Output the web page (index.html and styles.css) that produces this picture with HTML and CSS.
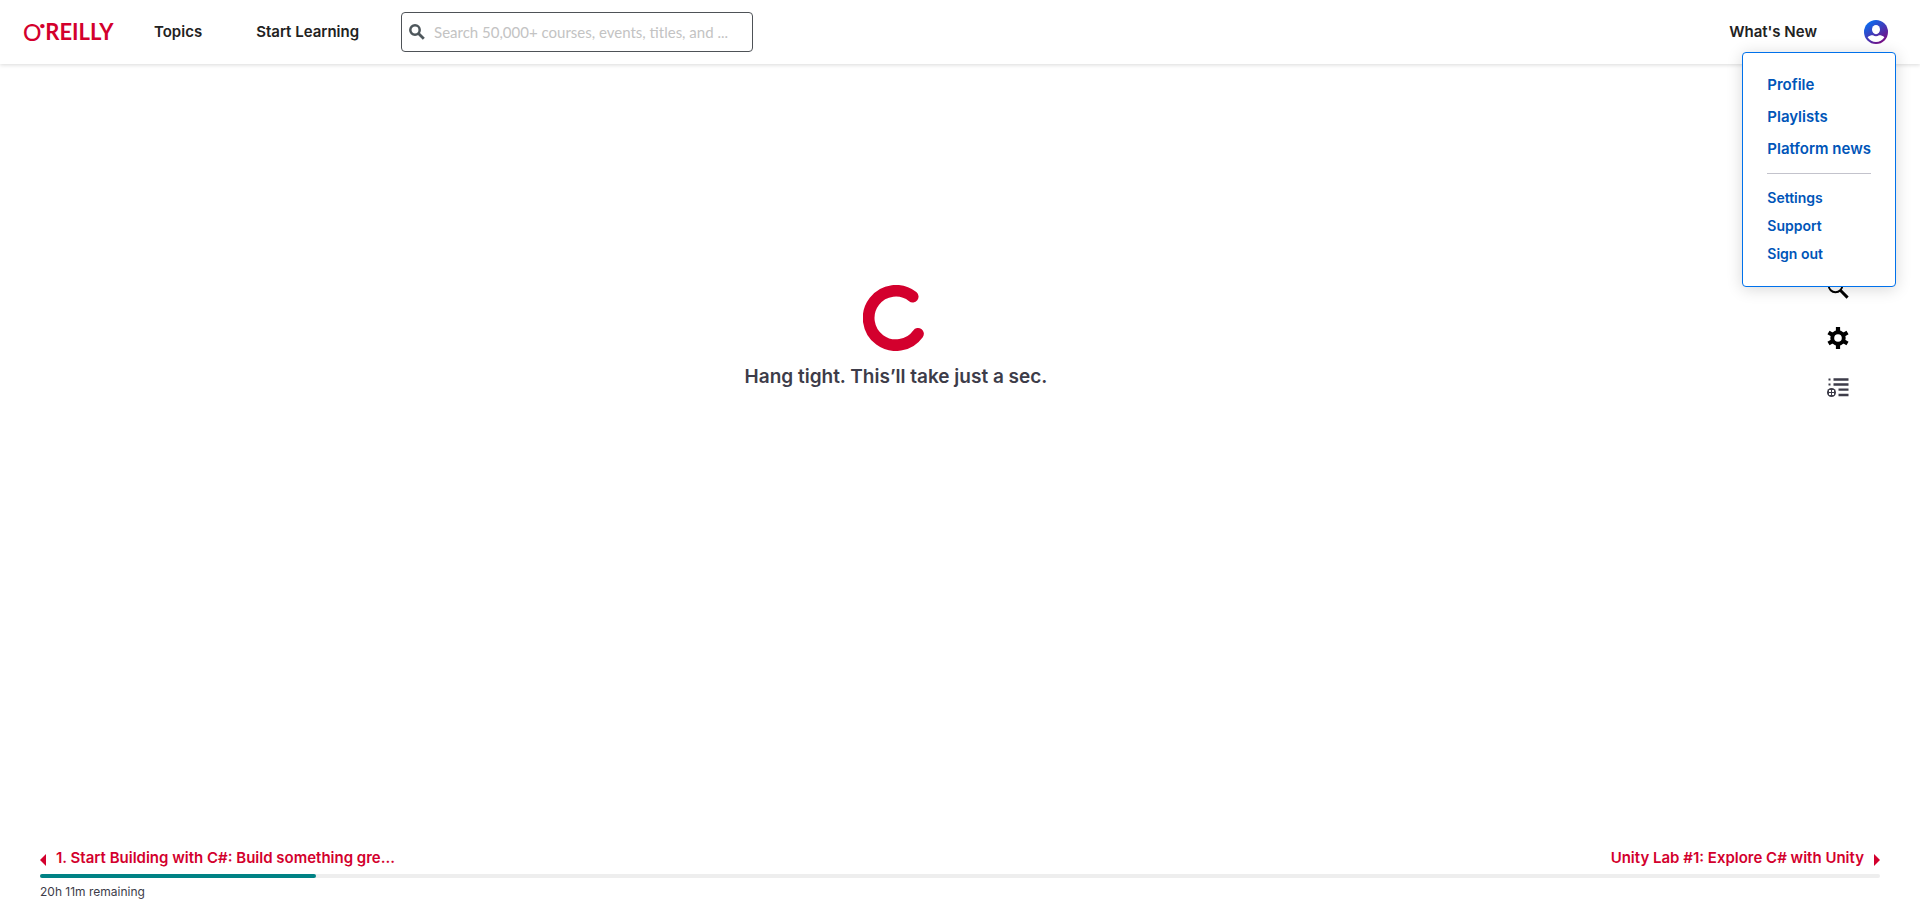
FILE: index.html
```html
<!DOCTYPE html>
<html lang="en">
<head>
<meta charset="utf-8">
<title>O'Reilly Learning</title>
<link rel="stylesheet" href="styles.css">
</head>
<body>
<header class="header">
  <a class="logo" href="#"><span class="logo-o">O</span><span class="logo-mark">•</span>REILLY</a>
  <nav class="nav">
    <a href="#">Topics</a>
    <a href="#">Start Learning</a>
  </nav>
  <form class="search" role="search">
    <svg class="search-icon" viewBox="0 0 16 16" aria-hidden="true"><circle cx="6" cy="6" r="4.7" fill="none" stroke="currentColor" stroke-width="2.5"/><path d="M9.5 9.5L14.8 14.8" stroke="currentColor" stroke-width="2.8"/></svg>
    <input class="search-input" type="search" aria-label="Search" placeholder="Search 50,000+ courses, events, titles, and ...">
  </form>
  <a class="whats-new" href="#">What's New</a>
  <div class="account">
    <button class="avatar" type="button" aria-label="Account menu" aria-expanded="true">
      <svg viewBox="0 0 24 24" aria-hidden="true">
        <defs><linearGradient id="avatar-fill" x1="0.15" y1="0.1" x2="0.8" y2="0.95"><stop offset="0" stop-color="#0a6cf0"/><stop offset="1" stop-color="#7a0a80"/></linearGradient></defs>
        <circle cx="12" cy="12" r="12" fill="url(#avatar-fill)"/>
        <ellipse cx="12" cy="9.6" rx="4" ry="4.6" fill="#fff"/>
        <path d="M3.6 17.2C5.5 15.4 7.5 15 9 15.2C10.8 16.5 13.2 16.5 15 15.2C16.5 15 18.5 15.4 20.4 17.2C18.5 20.2 15.4 21.9 12 21.9S5.5 20.2 3.6 17.2Z" fill="#fff"/>
      </svg>
    </button>
    <div class="menu">
      <ul class="menu-primary">
        <li><a href="#">Profile</a></li>
        <li><a href="#">Playlists</a></li>
        <li><a href="#">Platform news</a></li>
      </ul>
      <ul class="menu-secondary">
        <li><a href="#">Settings</a></li>
        <li><a href="#">Support</a></li>
        <li><a href="#">Sign out</a></li>
      </ul>
    </div>
  </div>
</header>
<div class="content">
  <main class="loading" role="status">
    <svg class="spinner" viewBox="0 0 66 66" aria-hidden="true"><path d="M49.7 11.6A27.2 27.2 0 1 0 55 48.8" fill="none" stroke="currentColor" stroke-width="11.7" stroke-linecap="round"/></svg>
    <p class="loading-text">Hang tight. This’ll take just a sec.</p>
  </main>
  <aside class="tools">
    <button type="button" aria-label="Search in book">
      <svg viewBox="0 0 22 22"><circle cx="8.5" cy="8.5" r="6.8" fill="none" stroke="currentColor" stroke-width="2"/><path d="M13.3 13.3L20.6 20.6" stroke="currentColor" stroke-width="3"/></svg>
    </button>
    <button type="button" aria-label="Display settings">
      <svg viewBox="0 0 22 22"><path d="M11 0V22M1.5 5.5L20.5 16.5M20.5 5.5L1.5 16.5" stroke="currentColor" stroke-width="4.2"/><circle cx="11" cy="11" r="7.7" fill="currentColor"/><circle cx="11" cy="11" r="3.8" fill="#fff"/></svg>
    </button>
    <button class="tool-playlist" type="button" aria-label="Add to playlist">
      <svg viewBox="0 0 22 22"><path d="M6.5 2.5H21.5M6.5 7.5H21.5M11.5 12.7H21.5M11.5 18H21.5" stroke="currentColor" stroke-width="2.3"/><path d="M1.5 2.5H3.5M1.5 7.5H3.5" stroke="currentColor" stroke-width="2"/><circle cx="4.5" cy="15.5" r="4.5" fill="currentColor"/><path d="M2 13H4V15H2ZM5 13H7V15H5ZM2 16H4V18H2ZM5 16H7V18H5Z" fill="#fff"/></svg>
    </button>
  </aside>
</div>
<footer class="footer">
  <nav class="pager" aria-label="Chapters">
    <a href="#"><svg class="arrow" viewBox="0 0 6 12" aria-hidden="true"><path d="M6 0V12L0 6Z" fill="currentColor"/></svg><span>1. Start Building with C#: Build something gre...</span></a>
    <a href="#"><span>Unity Lab #1: Explore C# with Unity</span><svg class="arrow" viewBox="0 0 6 12" aria-hidden="true"><path d="M0 0V12L6 6Z" fill="currentColor"/></svg></a>
  </nav>
  <div class="progress" role="progressbar" aria-label="Reading progress" aria-valuenow="15" aria-valuemin="0" aria-valuemax="100"><div class="progress-fill" style="width: 15%"></div></div>
  <p class="remaining">20h 11m remaining</p>
</footer>
</body>
</html>
```
FILE: styles.css
```css
* { box-sizing: border-box; }
body {
  margin: 0;
  min-height: 100vh;
  display: flex;
  flex-direction: column;
  background: #fff;
  color: #222;
  font-family: Inter, "Open Sans", sans-serif;
  font-size: 15px;
  line-height: 20px;
}
a { color: inherit; text-decoration: none; }
ul, p { margin: 0; padding: 0; list-style: none; }
button { padding: 0; border: 0; background: none; color: inherit; cursor: pointer; }
svg { display: block; }

.header {
  display: flex;
  align-items: center;
  height: 64px;
  padding: 0 32px 0 23px;
  background: #fff;
  box-shadow: 0 1px 4px rgba(0, 0, 0, 0.15);
  font-weight: 600;
}
.logo {
  display: flex;
  width: 131px;
  color: #d3002d;
  font: 700 22px/24px Lato, sans-serif;
}
.logo-o { font-weight: 500; font-size: 23px; }
.logo-mark { margin-left: -2px; font-size: 10px; line-height: 11px; }
.nav { display: flex; gap: 54px; margin-right: 42px; white-space: nowrap; }
.search {
  display: flex;
  align-items: center;
  gap: 8px;
  width: 352px;
  height: 40px;
  padding: 0 7px;
  border: 1px solid #4e5257;
  border-radius: 4px;
}
.search-icon { width: 16px; height: 16px; color: #4e575c; flex: none; }
.search-input {
  flex: 1;
  min-width: 0;
  padding: 0 0 0 1px;
  border: 0;
  outline: 0;
  background: none;
  font: 400 15px/20px Lato, sans-serif;
}
.search-input::placeholder { color: #c3c3c3; opacity: 1; }
.whats-new { margin: 0 47px 0 auto; }
.account { position: relative; }
.avatar { display: block; width: 24px; height: 24px; }
.menu {
  position: absolute;
  z-index: 2;
  top: 32px;
  right: -8px;
  padding: 16px 24px 18px;
  border: 1px solid #0071eb;
  border-radius: 4px;
  background: #fff;
  box-shadow: 0 2px 16px rgba(0, 0, 0, 0.16);
  color: #0055b8;
  white-space: nowrap;
}
.menu-primary { padding-bottom: 8px; border-bottom: 1px solid #c3c3cc; line-height: 32px; }
.menu-secondary { padding-top: 10px; font-size: 14px; line-height: 28px; }

.content { flex: 1; display: flex; padding-top: 213px; }
.loading { flex: 1; display: flex; flex-direction: column; align-items: center; gap: 14px; padding-top: 8px; }
.spinner { width: 66px; height: 66px; color: #d3002d; }
.loading-text { color: #3d3c49; font-size: 19px; line-height: 24px; font-weight: 600; }
.tools { display: flex; flex-direction: column; align-items: center; gap: 28px; width: 92px; margin-right: 36px; color: #000; }
.tools svg { width: 22px; height: 22px; }
.tool-playlist { color: #3d3c49; }

.footer { padding: 0 40px 8px; }
.pager {
  display: flex;
  justify-content: space-between;
  margin-bottom: 6px;
  color: #d3002d;
  font-weight: 600;
}
.pager a { display: flex; align-items: center; gap: 10px; }
.arrow { width: 6px; height: 12px; margin-top: 4px; }
.progress { height: 4px; border-radius: 2px; background: #eee; }
.progress-fill { height: 4px; border-radius: 2px; background: #008285; }
.remaining { margin-top: 4px; color: #3d3c49; font-size: 12px; }
```
